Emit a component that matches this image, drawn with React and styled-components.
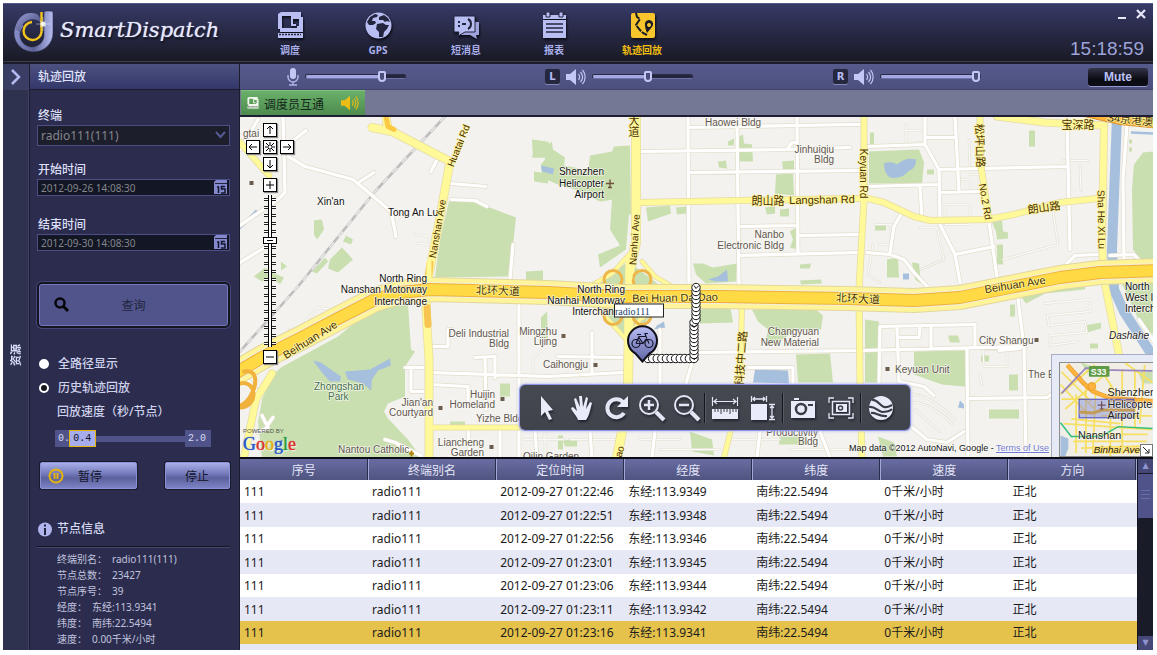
import React, { useState } from 'react';
import styled, { createGlobalStyle, css } from 'styled-components';

const sans = `"Noto Sans", "Noto Sans CJK SC", sans-serif`;
const arial = `"Liberation Sans", "Noto Sans CJK SC", sans-serif`;

const GlobalStyle = createGlobalStyle`
    * { box-sizing: border-box; }
    body {
        margin: 0;
        background: #fff;
        font-family: ${sans};
        font-size: 12px;
    }
    button, input, select {
        font-family: inherit;
        margin: 0;
        padding: 0;
        border: 0;
    }
    button { cursor: pointer; }
`;

const Page = styled.div`
    display: flex;
    height: 100vh;
    padding: 3px 4px 5px 3px;
`;

const Window = styled.div`
    flex: 1;
    min-width: 0;
    display: flex;
    flex-direction: column;
    background: #1b1c2c;
    overflow: hidden;
`;

/* ---------- header ---------- */

const Header = styled.header`
    display: flex;
    flex: none;
    height: 59px;
    border-top: 1px solid #54588a;
    background: linear-gradient(#373a66, #272945 50%, #191a24);
    border-bottom: 1px solid #3b3f4a;
`;

const Brand = styled.div`
    display: flex;
    flex: 0 0 243px;
    padding: 6px 0 0 10px;
    gap: 6px;
`;

const BrandName = styled.h1`
    margin: 0;
    color: #e6e8fc;
    font: italic 21px/40px "DejaVu Serif", serif;
    text-shadow: 0 0 1px #c8cbea, 1px 2px 2px #0a0b14;
`;

const Nav = styled.nav`
    display: flex;
    flex: 1;
`;

const NavItem = styled.button`
    display: flex;
    flex-direction: column;
    align-items: center;
    width: 88px;
    padding-top: 8px;
    background: none;
    color: ${props => props.$active ? '#f0bd10' : '#aab0ec'};
    font-size: 10px;
    line-height: 14px;
    font-weight: bold;
    svg {
        display: block;
        margin-bottom: 4px;
        filter: drop-shadow(1px 2px 1px #0c0d18);
    }
`;

const HeaderSide = styled.div`
    display: flex;
    flex-direction: column;
    justify-content: space-between;
    align-items: flex-end;
    padding: 2px 5px 1px 0;
`;

const WindowButtons = styled.div`
    display: flex;
    gap: 4px;
`;

const WindowButton = styled.button`
    width: 14px;
    height: 14px;
    background: none;
`;

const Clock = styled.time`
    padding-right: 4px;
    color: #9ea3d9;
    font: 19px/22px ${arial};
`;

/* ---------- body ---------- */

const Body = styled.div`
    display: flex;
    flex: 1;
    min-height: 0;
    padding-top: 2px;
`;

const Rail = styled.aside`
    display: flex;
    flex: 0 0 26px;
    flex-direction: column;
    align-items: center;
    background: #2f324f;
    border-right: 1px solid #3f4268;
`;

const RailButton = styled.button`
    width: 25px;
    height: 26px;
    background: #3b3e64;
    svg { display: block; margin: auto; }
`;

const RailLabel = styled.span`
    margin-top: 254px;
    color: #d9dcf5;
    font-size: 11px;
    line-height: 16px;
    font-weight: bold;
    writing-mode: vertical-rl;
    text-orientation: sideways;
    transform: rotate(180deg);
`;

const Sidebar = styled.section`
    flex: 0 0 209px;
    display: flex;
    flex-direction: column;
    margin: 0 1px;
    background: #2c2d4e;
    overflow: hidden;
`;

const SidebarTitle = styled.h2`
    flex: none;
    margin: 0;
    padding-left: 8px;
    height: 26px;
    border-bottom: 1px solid #1b1c30;
    background: linear-gradient(#4d5180, #34376a);
    color: #dfe2fa;
    font-size: 12px;
    line-height: 26px;
    font-weight: 500;
`;

const Form = styled.form`
    display: flex;
    flex-direction: column;
    padding: 18px 9px 0 7px;
`;

const Playback = styled.div`
    display: flex;
    flex-direction: column;
    padding: 24px 9px 0 7px;
`;

const FieldLabel = styled.label`
    margin-bottom: 1px;
    padding-left: 1px;
    color: #dcdff6;
    line-height: 16px;
    font-weight: 500;
`;

const Field = styled.div`
    display: flex;
    position: relative;
    height: ${props => props.$tall ? '21px' : '17px'};
    margin-bottom: ${props => props.$gap};
    border: 1px solid #4c4f86;
    background: ${props => props.$tall ? '#1d1e2b' : '#131624'};
`;

const Select = styled.select`
    flex: 1;
    appearance: none;
    padding-left: 3px;
    background: transparent;
    color: #85868c;
    font-size: 12px;
    line-height: 16px;
`;

const SelectArrow = styled.svg`
    position: absolute;
    right: 3px;
    top: 5px;
    pointer-events: none;
`;

const DateInput = styled.input`
    flex: 1;
    min-width: 0;
    padding-left: 3px;
    background: transparent;
    color: #85868c;
    font-size: 10px;
`;

const CalendarButton = styled.button`
    width: 15px;
    background: none;
    svg { display: block; }
`;

const QueryButton = styled.button`
    position: relative;
    height: 46px;
    border: 2px solid #14151f;
    border-radius: 5px;
    background: #50548a;
    box-shadow: inset 0 0 0 1px #7277be, 0 0 0 1px #42457a;
    color: #23253f;
    font-size: 12px;
    svg {
        position: absolute;
        left: 14px;
        top: 12px;
    }
`;

const RadioRow = styled.label`
    display: flex;
    align-items: center;
    gap: 9px;
    padding-left: 2px;
    color: #cfd2ec;
    font-weight: 500;
    line-height: 24px;
    input {
        appearance: none;
        width: 10px;
        height: 10px;
        border-radius: 5px;
        border: 2px solid #fff;
        background: #fff;
    }
    input:checked { background: #14151f; }
`;

const SpeedLabel = styled.label`
    padding-left: 20px;
    color: #cfd2ec;
    font-weight: 500;
    line-height: 24px;
`;

const Speed = styled.div`
    position: relative;
    display: flex;
    align-items: center;
    justify-content: space-between;
    width: 156px;
    height: 17px;
    margin: 6px 0 15px 18px;
    background: linear-gradient(#50538a, #50538a) center / 100% 6px no-repeat;
`;

const SpeedEnd = styled.span`
    width: 26px;
    padding-left: 3px;
    background: #50538a;
    color: #d9dbee;
    font: 10px/17px "Liberation Mono", monospace;
`;

const SpeedRange = styled.input`
    position: absolute;
    inset: 0;
    width: 100%;
    height: 17px;
    appearance: none;
    background: none;
    &::-webkit-slider-thumb {
        appearance: none;
        width: 27px;
        height: 17px;
        border: 1px solid #e5b40b;
        background: #a7adec;
    }
`;

const SpeedValue = styled.output`
    position: absolute;
    padding-left: 4px;
    color: #101225;
    font: 10px/17px "Liberation Mono", monospace;
    pointer-events: none;
`;

const Actions = styled.div`
    display: flex;
    justify-content: space-between;
    padding-left: 3px;
`;

const ActionButton = styled.button`
    display: flex;
    align-items: center;
    gap: 14px;
    width: ${props => props.$wide ? '97px' : '65px'};
    height: 27px;
    padding-left: ${props => props.$wide ? '7px' : '19px'};
    border: 1px solid #8c92d6;
    border-radius: 2px;
    background: linear-gradient(#a8aee8, #7277b8 45%, #5c609c 60%, #7d83c6);
    box-shadow: 0 0 0 1px #191a2b;
    color: #14162c;
    font-size: 12px;
`;

const InfoTitle = styled.h3`
    display: flex;
    align-items: center;
    gap: 5px;
    margin: 30px 0 7px;
    padding: 0 0 7px 1px;
    border-bottom: 1px solid #15161f;
    box-shadow: 0 1px #45486f;
    color: #d5d8f2;
    font-size: 12px;
    line-height: 20px;
    font-weight: 500;
`;

const InfoList = styled.dl`
    margin: -3px 0 0 20px;
    color: #c0c3de;
    font-size: 10px;
    line-height: 16px;
`;

const InfoRow = styled.div`
    display: flex;
    gap: 5px;
    dd { margin: 0; }
`;

const Main = styled.main`
    display: flex;
    flex: 1;
    flex-direction: column;
    min-width: 0;
`;

const AudioBar = styled.div`
    display: flex;
    flex: none;
    align-items: center;
    height: 26px;
    padding: 0 5px 0 44px;
    border-bottom: 1px solid #41436a;
    background: linear-gradient(#565a8c, #4d507e);
`;

const Channel = styled.label`
    display: flex;
    align-items: center;
    flex: 0 1 ${props => props.$width};
    svg { flex: none; }
`;

const ChannelMark = styled.span`
    width: 15px;
    height: 15px;
    margin-right: 6px;
    border-radius: 2px;
    background: #25273f;
    box-shadow: 0 1px #8388bb;
    color: #b6bbf0;
    font: bold 10px/15px "DejaVu Sans", sans-serif;
    text-align: center;
`;

const VolumeRange = styled.input`
    appearance: none;
    width: 101px;
    height: 13px;
    margin-left: ${props => props.$gap};
    background: none;
    &::-webkit-slider-runnable-track {
        height: 5px;
        border-radius: 3px;
        border: 1px solid #2a2c47;
        border-bottom-color: #6d72a8;
        background: linear-gradient(90deg, #a4a9e2 var(--level), #24263d var(--level));
    }
    &::-webkit-slider-thumb {
        appearance: none;
        width: 8px;
        height: 11px;
        margin-top: -4px;
        border: 2px solid #c3c7f3;
        border-radius: 2px 2px 4px 4px;
        background: #4a4d7a;
    }
`;

const MuteButton = styled.button`
    width: 60px;
    height: 18px;
    margin-left: auto;
    border-radius: 3px;
    background: linear-gradient(#33354a, #0c0d14 60%);
    box-shadow: 0 1px #9297cc;
    color: #bcc1f5;
    font: bold 12px/16px ${arial};
`;

const TabStrip = styled.div`
    display: flex;
    flex: none;
    height: 27px;
    padding-left: 1px;
    border-bottom: 2px solid #1d1e33;
    background: #757894;
`;

const Tab = styled.button`
    display: flex;
    align-items: center;
    width: 124px;
    padding: 0 6px;
    border-top: 1px solid #7fc07f;
    background: linear-gradient(#69b069, #4d8b4e);
    color: #12261a;
    font-size: 12px;
    span { margin: 2px auto 0 5px; }
`;

/* ---------- map ---------- */

const MapArea = styled.div`
    position: relative;
    flex: 1;
    min-height: 0;
    overflow: hidden;
    background: #f3f2ef;
`;

const MapSvg = styled.svg`
    display: block;
    width: 100%;
    height: 100%;
    font-family: ${arial};
`;

const MapNav = styled.div`
    position: absolute;
    left: 6px;
    top: 6px;
    display: grid;
    grid-template-columns: repeat(3, 14px);
    gap: 3px;
    justify-items: center;
`;

const mapKey = css`
    width: 14px;
    height: 14px;
    border: 1px solid #000;
    background: #fff;
    box-shadow: 1px 1px 1px #8a8a8a;
`;

const MapButton = styled.button`
    ${mapKey}
    grid-column: ${props => props.$col};
    margin-top: ${props => props.$apart ? '4px' : '0'};
    svg { display: block; }
`;

const ZoomRange = styled.input`
    grid-column: 2;
    appearance: none;
    writing-mode: vertical-lr;
    width: 14px;
    height: 152px;
    background:
        linear-gradient(#000, #000) 5px 0 / 1px 100% no-repeat,
        linear-gradient(#fff, #fff) 6px 0 / 2px 100% no-repeat,
        linear-gradient(#000, #000) 8px 0 / 1px 100% no-repeat,
        repeating-linear-gradient(transparent 0 3px, #222 3px 4px, #fff 4px 5px, #222 5px 6px, transparent 6px 8px) 1px 0 / 12px 100% no-repeat;
    &::-webkit-slider-thumb {
        appearance: none;
        width: 14px;
        height: 7px;
        border: 1px solid #000;
        background: linear-gradient(#000, #000) center / 6px 1px no-repeat #fff;
    }
`;

const MapTools = styled.div`
    position: absolute;
    left: 280px;
    bottom: 27px;
    display: flex;
    align-items: center;
    height: 45px;
    padding: 0 10px 0 9px;
    border-radius: 5px;
    background: linear-gradient(#474951, #41434c);
    box-shadow: 0 0 0 1px #8f97e4, 0 0 3px 1px #a9b0f5;
`;

const Tool = styled.button`
    width: ${props => props.$wide ? '38px' : '35px'};
    height: 40px;
    background: none;
    svg {
        display: block;
        margin: auto;
        filter: drop-shadow(1px 2px 1px #23252e);
    }
`;

const ToolDivider = styled.span`
    width: 2px;
    height: 30px;
    background: #15161d;
    border-right: 1px solid #5a5d68;
`;

const Credits = styled.div`
    position: absolute;
    right: 104px;
    bottom: 3px;
    color: #111;
    font: 9px/12px ${arial};
    text-shadow: 0 0 2px #fff, 0 0 2px #fff;
    a { color: #7378d0; }
`;

const PoweredBy = styled.div`
    position: absolute;
    left: 3px;
    bottom: 3px;
    color: #555;
    font: 6px/7px ${arial};
`;

const Google = styled.div`
    font: 18px/19px "Liberation Serif", serif;
    text-shadow: 0 0 1px currentColor, 1px 1px 1px #fff;
`;

const Glyph = styled.span`
    color: ${props => props.$color};
`;

const MiniMap = styled.div`
    position: absolute;
    right: 0;
    bottom: 0;
    padding: 7px 0 0 7px;
    border-left: 1px solid #a9adc4;
    border-top: 1px solid #a9adc4;
    background: #e6e9f6;
    svg {
        display: block;
        border: 1px solid #8d8d8d;
        border-right: 0;
        font-family: ${arial};
    }
`;

const MiniToggle = styled.button`
    position: absolute;
    right: 0;
    bottom: 0;
    width: 13px;
    height: 13px;
    border: 1px solid #777;
    background: #fff;
    svg { border: 0; }
`;

/* ---------- table ---------- */

const TableArea = styled.div`
    display: flex;
    flex: none;
    height: 193px;
    border-top: 2px solid #0b0c14;
    background: #e6e8f6;
    overflow: hidden;
`;

const Table = styled.table`
    flex: 1;
    width: 100%;
    height: max-content;
    table-layout: fixed;
    border-collapse: collapse;
    th {
        height: 21px;
        padding: 2px 0 0;
        border-right: 1px solid #a3a7d3;
        box-shadow: inset -1px 0 #2b2d4c;
        background: linear-gradient(#686ca2, #50547f);
        color: #e4e6f8;
        font-weight: normal;
        line-height: 18px;
    }
    td {
        height: 24px;
        padding: 1px 0 0 4px;
        color: #1b1b1b;
        line-height: 20px;
        white-space: nowrap;
    }
`;

const Row = styled.tr`
    background: ${props => props.$selected ? '#e4c24c' : '#fff'};
    &:nth-child(even) { background: #e6e8f6; }
    &:nth-child(odd) td { height: 23px; }
`;

const ScrollBar = styled.div`
    display: flex;
    flex: 0 0 16px;
    flex-direction: column;
    border-left: 1px solid #14151f;
    background: #1a1b29;
`;

const ScrollButton = styled.button`
    height: 14px;
    background: #454877;
    color: #8f94d0;
    font: 8px/14px "DejaVu Sans", sans-serif;
`;

const ScrollThumb = styled.div`
    height: 44px;
    margin: 1px 0 auto;
    padding-top: 16px;
    background: #50538a;
    &::after {
        content: '';
        display: block;
        height: 9px;
        margin: 0 3px;
        background: repeating-linear-gradient(#6a6eaa 0 1px, transparent 1px 4px);
    }
`;

/* ---------- icons ---------- */

const Logo = () => (
    <svg width="41" height="43" viewBox="0 0 41 43">
        <defs>
            <linearGradient id="ring" x1="0" y1="0" x2="1" y2="0">
                <stop offset="0" stopColor="#8a90cc" />
                <stop offset=".5" stopColor="#5d6296" />
                <stop offset="1" stopColor="#b9bef2" />
            </linearGradient>
            <linearGradient id="swoosh" x1="0" y1="0" x2="1" y2="1">
                <stop offset="0" stopColor="#9ba0dc" />
                <stop offset="1" stopColor="#3a3e68" />
            </linearGradient>
        </defs>
        <path d="M31 3a2 2 0 0 1 2-2h5a2 2 0 0 1 2 2v20a19.500 19 0 0 1-39 0c0-5 2-9 5-12l5 5a12 12 0 1 0 20 8z" fill="url(#ring)" stroke="#2a2d4c" strokeWidth=".6" />
        <path d="M2 19C4 8 11 2 19 3c6 0 9 4 9 10-5-5-13-5-18 1-2 2-3 5-3 8z" fill="url(#swoosh)" />
        <path d="M28.500 2v20a9 9 0 1 1-9.500-10" fill="none" stroke="#f2c31c" strokeWidth="2.400" />
        <circle cx="30" cy="14" r="2.600" fill="#fff" opacity=".85" />
        <path d="M23 14h14M30 7v14M27 11l6 6M33 11l-6 6" stroke="#fff" strokeWidth=".7" opacity=".6" />
    </svg>
);

const DispatchIcon = ({ size = 27, color = '#b9bef2' }) => (
    <svg width={size} height={size} viewBox="0 0 27 27">
        <path fillRule="evenodd" d="M4 0h20v5h2v15H3v-3H1V2zM5 4v12h15v-2h2V7h-6v5h3v2h-5V4z" fill={color} />
        <path d="M1 21h25v5H1z" fill={color} />
        <path d="M2 22.500h22" stroke="#23253f" strokeWidth="1.500" strokeDasharray="2 1" />
    </svg>
);

const GlobeIcon = () => (
    <svg width="27" height="27" viewBox="0 0 27 27">
        <circle cx="13.500" cy="13.500" r="13" fill="#b9bef2" />
        <path d="M5 5l5-3 3 1-1 2-4 1-1 3 3 0 1 2-3 2-4 0-2-3zM14 5l5-2 4 3 2 4-3-1-2 1-2-2-4 0zM12 12l6-1 3 2 3 0-2 4-3 3-1 5-4 0 0-5-3-3z" fill="#23253f" />
    </svg>
);

const MessageIcon = () => (
    <svg width="27" height="27" viewBox="0 0 27 27">
        <path d="M8 10h18v13h-3l1 4-7-4H8z" fill="#9fa5dc" />
        <path d="M1 4h21v16H12l-7 4 1-4H1z" fill="#b9bef2" stroke="#22243d" strokeWidth="1" />
        <path d="M5 9h2v2H5zM5 13h2v2H5zM9 11h4v2H9z" fill="#22243d" />
        <path d="M15 7c4 2 4 8 0 10" fill="none" stroke="#22243d" strokeWidth="2" />
    </svg>
);

const ReportIcon = () => (
    <svg width="27" height="27" viewBox="0 0 27 27">
        <path d="M2 3h23v4H2zM2 8h23v18H2z" fill="#b9bef2" />
        <path d="M5 0h4v5H5zM18 0h4v5h-4z" fill="#b9bef2" stroke="#23253f" />
        <path d="M5 12h17M5 16h17M5 20h17" stroke="#23253f" strokeWidth="1.500" />
    </svg>
);

const TrackIcon = () => (
    <svg width="27" height="27" viewBox="0 0 27 27">
        <rect x="2" y="1" width="24" height="25" rx="2" fill="#f8c62c" />
        <path d="M7 1l1 4 3 2-4 6 4 5 3 3 4 2" fill="none" stroke="#1b1c24" strokeWidth="2" strokeDasharray="7 1" />
        <path fillRule="evenodd" d="M20 8a4 4 0 0 1 4 5c-1 3-4 5-6 8-1-3-2-5-2-8a4 4 0 0 1 4-5zm0 3a2 2 0 1 0 .1 0z" fill="#1b1c24" />
    </svg>
);

const MicIcon = () => (
    <svg width="17" height="18" viewBox="0 0 17 18">
        <rect x="6" y="0" width="6" height="11" rx="3" fill="#c3c7f3" />
        <path d="M4 7v2a5 5 0 0 0 10 0V7M9 14v3M5 17h8" fill="none" stroke="#aeb3e8" strokeWidth="1.500" />
    </svg>
);

const SpeakerIcon = ({ color = '#c3c7f3', width = 20 }) => (
    <svg width={width} height="16" viewBox="0 0 20 16">
        <path d="M0 5h4l6-5v16l-6-5H0z" fill={color} />
        <path d="M12.500 5c1.500 2 1.500 4 0 6M14.500 3c2.500 3 2.500 7 0 10M16.500 1c3.500 4 3.500 10 0 14" fill="none" stroke={color} strokeWidth="1.200" />
    </svg>
);

const CalendarIcon = () => (
    <svg width="14" height="15" viewBox="0 0 14 15">
        <path d="M0 2l2-2h11v14H0z" fill="#8388cf" />
        <path d="M1 3.500h12" stroke="#23253f" strokeWidth="1" />
        <path d="M3 7h1.500v6M11 6.500H7.500v2.500H11v4H7" fill="none" stroke="#15162a" strokeWidth="1.500" />
    </svg>
);

const tool = { fill: 'none', stroke: '#e4e6f6', strokeWidth: 2 };

const CursorIcon = () => (
    <svg width="26" height="26" viewBox="0 0 26 26"><path d="M7 1l12 14-5 1 4 8-3 1-4-8-4 4z" fill="#e9ebfa" /></svg>
);

const HandIcon = () => (
    <svg width="26" height="26" viewBox="0 0 26 26">
        <path d="M9 25c-1-4-6-8-7-12l2-1 4 4L5 4l2-1 4 9-1-11h3l1 11 3-10 2 1-2 11 4-7 2 1c-2 8-3 13-6 17z" fill="#e9ebfa" />
    </svg>
);

const RedoIcon = () => (
    <svg width="26" height="26" viewBox="0 0 26 26">
        <path d="M19 7a9 9 0 1 0 1 11" {...tool} strokeWidth="4" />
        <path d="M24 1v11H13z" fill="#e9ebfa" />
    </svg>
);

const ZoomIcon = ({ plus }) => (
    <svg width="28" height="28" viewBox="0 0 28 28">
        <circle cx="11" cy="11" r="9" {...tool} />
        <path d="M18 18l8 8" {...tool} strokeWidth="4" />
        <path d={plus ? 'M6 11h10M11 6v10' : 'M6 11h10'} {...tool} strokeWidth="2.500" />
    </svg>
);

const RulerIcon = () => (
    <svg width="28" height="24" viewBox="0 0 28 24">
        <path d="M1 13h26v10H1z" fill="#e9ebfa" />
        <path d="M4 13v3M7 13v3M10 13v5M13 13v3M16 13v3M19 13v5M22 13v3M25 13v3" stroke="#3a3c46" />
        <path d="M1.500 1v9M26.500 1v9M3 5.500h22M6 3L3 5.500 6 8M22 3l3 2.500L22 8" {...tool} strokeWidth="1.200" />
    </svg>
);

const AreaIcon = () => (
    <svg width="26" height="26" viewBox="0 0 26 26">
        <path d="M1 9h16v16H1z" fill="#e9ebfa" />
        <path d="M1.500 1v6M16.500 1v6M3 4h12M5 2L3 4l2 2M13 2l2 2-2 2M19 9.500h6M19 24.500h6M22 11v12M20 13l2-2 2 2M20 21l2 2 2-2" {...tool} strokeWidth="1.300" />
    </svg>
);

const CameraIcon = () => (
    <svg width="26" height="22" viewBox="0 0 26 22">
        <path d="M4 1h5v2H4zM1 4h24v17H1z" fill="#e9ebfa" />
        <circle cx="11" cy="12" r="5" fill="none" stroke="#3a3c46" strokeWidth="2.500" />
        <path d="M18 7h5v2h-5z" fill="#3a3c46" />
    </svg>
);

const CaptureIcon = () => (
    <svg width="26" height="22" viewBox="0 0 26 22">
        <path d="M1 6V1h5M20 1h5v5M25 16v5h-5M6 21H1v-5" {...tool} strokeWidth="1.300" />
        <rect x="4.500" y="4.500" width="17" height="13" {...tool} strokeWidth="1.500" />
        <path d="M8 7h11v8H8z" fill="#e9ebfa" />
        <circle cx="12.500" cy="11" r="2" fill="none" stroke="#3a3c46" strokeWidth="1.500" />
    </svg>
);

const EarthIcon = () => (
    <svg width="26" height="26" viewBox="0 0 26 26">
        <circle cx="13" cy="13" r="12" fill="#e9ebfa" />
        <path d="M4 5c5-1 7 5 12 7 4 1 6-1 8-2M1 12c6-1 8 4 13 5 5 0 8-1 10-3M3 18c5-1 8 4 16 3" fill="none" stroke="#3a3c46" strokeWidth="2.200" />
    </svg>
);

/* ---------- map data ---------- */

const parks = [
    'M449 202L471 201L516 218L513 245L508 277L435 278L440 240Z',
    'M338 337L361 318L388 307L408 305L411 350L415 352L405 367L405 397L388 404L384 412L388 419L408 440L421 458L262 458L258 423L262 400L271 377L281 368Z',
    'M545 148L552 142L553 150L565 158L564 166L575 168L588 172L590 156L612 152L614 147L630 146L631 215L612 214L614 200L600 202L575 190L560 186L542 178L541 165L545 160Z',
    'M612 200L630 202L626 250L600 268L598 255L620 246L610 230Z',
    'M534 150L548 142L552 150L544 158L532 158ZM534 172L548 174L548 184L534 182Z',
    'M590 292L628 262L668 292L628 346Z',
    'M646 208L670 206L671 214L648 222ZM676 208L686 207L686 214L677 215Z',
    'M738 138L743 135L744 144L752 145L753 162L739 162ZM728 142L734 139L734 146L728 146ZM718 162L726 161L727 169L719 168Z',
    'M782 162L794 161L794 170L783 170ZM776 175L793 174L794 196L775 194Z',
    'M765 208L775 207L775 214L767 215ZM780 210L789 209L789 217L780 217ZM790 232L796 228L797 250L790 248L793 240Z',
    'M693 264L703 264L713 268L737 264L736 282L706 284L696 275Z',
    'M800 265L811 264L810 269L800 269ZM800 281L821 280L822 284L801 285Z',
    'M869 152L919 150L924 163L922 184L869 184Z',
    'M870 133h4v12h-4ZM1029 131h6v16h-6ZM927 170h7v5h-7Z',
    'M992 223L1002 221L1003 232L1008 233L1008 239L997 240L996 232ZM997 245h6v20h-6Z',
    'M887 260L898 258L899 278L887 278ZM912 263L919 264L921 284L915 280ZM875 225h11v6h-11Z',
    'M1154 152L1143 153L1134 165L1132 190L1133 250L1145 266L1154 270Z',
    'M1129 148h3v4h-3ZM1129 140h3v4h-3Z',
    'M1020 296L1050 288L1085 285L1085 290L1045 294L1026 304Z',
    'M752 310L812 307L823 316L821 330L797 330L775 345L765 345L768 330L758 322Z',
    'M700 310L730 307L733 323L700 324Z',
    'M796 355L830 354L833 383L798 383Z',
    'M865 320L879 322L879 383L865 383Z',
    'M914 352L965 351L965 387L942 385L914 375Z',
    'M948 336L958 336L960 343L950 343ZM981 356h8v6h-8ZM1009 375h9v16h-9ZM989 410h30v9h-30ZM1085 326l16-3v6l-14 4ZM1010 305h5v12h-5ZM1090 344h8v5h-8Z',
    'M500 384h10v13h-10ZM541 318L547 312L548 340L541 338ZM450 422h15v5h-15Z',
    'M314 221L322 220L324 230L317 240L314 235ZM346 236l7 4l-2 5l-8-3ZM330 260L342 248L353 260L338 273L328 269ZM312 272L325 258L328 262L317 274ZM254 277L265 268L270 272L284 278L280 285L270 276L262 282Z',
    'M532 140L547 142L548 158L533 158ZM526 272L543 271L543 282L526 282ZM281 262l6 5l-6 4Z',
    'M690 432L712 440L714 456L692 452ZM558 436h5v14h-5ZM779 437h28v8h-28ZM878 437l16 6l3 14h-14ZM563 441l14-2v8h-12Z',
    'M1120 280L1154 270L1154 335L1143 330Z'
];

const waters = [
    'M313 361L321 363L341 377L340 382L330 382L322 373Z',
    'M345 372L370 370L390 359L391 366L378 371L372 380L371 391L363 384L348 380Z',
    'M884 164Q890 161 897 165Q906 157 916 160Q917 168 908 172Q902 180 890 178Q884 174 884 164Z',
    'M541 166L554 169L553 175L542 172Z',
    'M708 280L718 277L727 270L728 282L716 282Z',
    'M657 326L664 322L665 328L654 330Z',
    'M755 370L788 371L789 384L753 383Z',
    'M873 411L884 411L884 425L872 425Z',
    'M960 401l4 4v4l-6-1ZM903 274h6v6h-6Z',
    'M240 226L256 210L259 213L240 230Z'
];

const streets = [
    'M688 117L689 287', 'M737 126L739 287', 'M797 117L798 254', 'M688 128L850 125', 'M642 152L787 150L850 148',
    'M690 173L862 171', 'M740 227L797 226', 'M800 236L862 235', 'M740 256L860 253', 'M787 150L792 143L797 143',
    'M867 253L890 255L904 260L914 273L930 290', 'M890 253L894 227L902 213', 'M867 147L925 145L939 170L940 220',
    'M925 117L925 145', 'M927 138L955 138', 'M955 117L959 192', 'M939 170L1067 167', 'M1067 120L1070 250',
    'M867 187L938 185', 'M920 187L922 218', 'M940 193L979 192', 'M940 225L955 255L960 283', 'M955 255L994 247',
    'M989 223L997 277', 'M1064 267L1075 256L1098 255', 'M1110 256L1134 255L1145 267', 'M847 125L862 125',
    'M879 383L880 327L975 325L975 347', 'M862 351L1024 347', 'M897 328L899 382L924 387L934 396', 'M920 328L919 338L899 338',
    'M931 328L931 347', 'M967 350L968 458', 'M1017 292L1024 347L1026 458', 'M969 399L1047 398L1056 392',
    'M905 422L927 440L947 443L964 432', 'M999 351L1020 349', 'M699 353L862 351', 'M748 368L793 368L793 384',
    'M692 363L686 384', 'M660 330L660 384', 'M519 303L519 458', 'M430 373L548 377L623 373', 'M592 333L592 373',
    'M558 357L622 358', 'M430 347L448 347L448 330L452 330', 'M475 358L495 357L495 378', 'M485 358L486 410',
    'M430 385L468 387L468 403', 'M405 368L427 368', 'M411 368L411 392L425 392', 'M385 440L395 443L421 456',
    'M468 430L470 458', 'M535 432L537 458', 'M590 432L592 458', 'M655 432L652 458', 'M760 432L757 458', 'M820 432L830 458',
    'M283 117L285 193L278 200L240 226', 'M288 157L305 167L353 180L371 195L391 212L396 237', 'M360 182L374 173',
    'M292 142L306 131', 'M438 158L431 172', 'M451 184L486 187', 'M451 200L475 201L487 207', 'M513 245L510 280',
    'M240 263L265 248L276 240', 'M240 150L258 120', 'M262 416L268 428L258 433M268 425L273 418', 'M1139 320L1154 342',
    'M500 431L500 458', 'M1127 125L1123 180L1124 262', 'M240 372L256 391'
];

const lanes = [
    'M908 165M906 125L906 144L925 143M906 131h19M969 140L970 168M960 180h10v12M970 175h9v14',
    'M945 205h25v20h-25Z M920 228h17l7 32l-23 10', 'M1003 260L1058 245L1053 212', 'M873 245L868 275L880 283M875 225h16v20h-12',
    'M1045 304L1090 300L1090 312L1047 316L1049 326L1085 322L1087 333L1050 336L1050 346L1078 342', 'M983 350h24v17h-23Z',
    'M1063 161h25M1080 167l1 24', 'M524 440h40M545 432v26M570 440h50M640 440h40M660 450h60M730 440h50M790 450h66',
    'M900 395c20-5 40 10 55 25M905 403c20-3 38 12 48 22M915 410l25 22', 'M415 235l15 2v8l-12-1', 'M298 330l20-22l35 5M270 360l20-30',
    'M526 385L519 404M548 345l-15 14v16', 'M980 375l2 10'
];

const avenues = [
    { d: 'M386 117L388 130M372 128L392 132L450 162L441 212L429 275L426 310L429 360L429 458', w: 8 },
    { d: 'M636 117L636 243L630 270L628 384L622 432L617 458', w: 9 },
    { d: 'M640 203L847 199L868 199L884 203L914 217L930 221L987 220L1014 215L1060 203L1098 199', w: 6 },
    { d: 'M864 117L864 200L859 290L860 384L862 458', w: 6 },
    { d: 'M980 117L981 167L989 220', w: 6 },
    { d: 'M997 117L1045 123L1104 126L1102 243L1104 280L1118 350L1124 380', w: 7 },
    { d: 'M742 305L740 383L731 430L724 458', w: 5 },
    { d: 'M430 428L520 428', w: 5 },
    { d: 'M240 143L269 176', w: 6 },
    { d: 'M630 254L612 274L588 288L548 285M642 262L655 277L672 287', w: 4 },
    { d: 'M590 300L628 342L640 320L668 302', w: 4 },
    { d: 'M244 458L256 400L272 374', w: 7 }
];

const highway = 'M230 377L262 358L300 339L338 319L375 300L400 293L430 290L548 293L620 297L720 297L847 299L914 301L960 298L1010 288L1060 278L1100 273L1160 271';

const labels = [
    { x: 243, y: 137, t: 'gtai', poi: true }, { x: 317, y: 205, t: "Xin'an" }, { x: 388, y: 216, t: 'Tong An Lu' },
    { x: 427, y: 282, t: 'North Ring', end: true }, { x: 427, y: 293, t: 'Nanshan Motorway', end: true }, { x: 427, y: 305, t: 'Interchange', end: true },
    { x: 604, y: 175, t: 'Shenzhen', end: true }, { x: 604, y: 187, t: 'Helicopter', end: true }, { x: 604, y: 198, t: 'Airport', end: true },
    { x: 625, y: 293, t: 'North Ring', end: true }, { x: 625, y: 304, t: 'Nanhai Motorway', end: true }, { x: 625, y: 315, t: 'Interchange', end: true },
    { x: 705, y: 126, t: 'Haowei Bldg', poi: true }, { x: 834, y: 153, t: 'Jinhuiqiu', end: true, poi: true }, { x: 834, y: 163, t: 'Bldg', end: true, poi: true },
    { x: 784, y: 238, t: 'Nanbo', end: true, poi: true }, { x: 784, y: 249, t: 'Electronic Bldg', end: true, poi: true },
    { x: 509, y: 337, t: 'Deli Industrial', end: true, poi: true }, { x: 509, y: 347, t: 'Bldg', end: true, poi: true },
    { x: 557, y: 335, t: 'Mingzhu', end: true, poi: true }, { x: 557, y: 345, t: 'Lijing', end: true, poi: true }, { x: 588, y: 368, t: 'Caihongju', end: true, poi: true },
    { x: 314, y: 390, t: 'Zhongshan', park: true }, { x: 328, y: 400, t: 'Park', park: true },
    { x: 433, y: 406, t: "Jian'an", end: true, poi: true }, { x: 433, y: 416, t: 'Courtyard', end: true, poi: true },
    { x: 495, y: 398, t: 'Huijin', end: true, poi: true }, { x: 495, y: 408, t: 'Homeland', end: true, poi: true }, { x: 476, y: 422, t: 'Yizhe Bldg', poi: true },
    { x: 484, y: 446, t: 'Liancheng', end: true, poi: true }, { x: 484, y: 456, t: 'Garden', end: true, poi: true }, { x: 338, y: 453, t: 'Nantou Catholic', poi: true },
    { x: 523, y: 460, t: 'Qilin Garden', poi: true }, { x: 819, y: 335, t: 'Changyuan', end: true, poi: true }, { x: 819, y: 346, t: 'New Material', end: true, poi: true },
    { x: 818, y: 436, t: 'Productivity', end: true, poi: true }, { x: 818, y: 445, t: 'Bldg', end: true, poi: true }, { x: 979, y: 344, t: 'City Shangu', poi: true },
    { x: 895, y: 373, t: 'Keyuan Unit', poi: true }, { x: 1028, y: 378, t: 'The E', poi: true }, { x: 1125, y: 290, t: 'North' }, { x: 1125, y: 301, t: 'West I' }, { x: 1125, y: 312, t: 'Interch' }
];

const roadLabels = [
    { x: 458, y: 146, a: -68, t: 'Huatai Rd', s: 10 }, { x: 437, y: 229, a: -80, t: 'Nanshan Ave', s: 10 }, { x: 634, y: 240, a: -86, t: 'Nanhai Ave', s: 10 },
    { x: 634, y: 121, a: 0, t: '大' }, { x: 634, y: 132, a: 0, t: '道' }, { x: 822, y: 200, a: -1, t: 'Langshan Rd' }, { x: 768, y: 201, a: 0, t: '朗山路' }, { x: 1044, y: 208, a: -8, t: '朗山路' },
    { x: 864, y: 174, a: 90, t: 'Keyuan Rd', s: 10 }, { x: 980, y: 146, a: 88, t: '松坪山路' }, { x: 986, y: 202, a: 80, t: 'No.2 Rd', s: 10 },
    { x: 1078, y: 125, a: 0, t: '宝深路' }, { x: 1102, y: 220, a: 89, t: 'Sha He Xi Lu', s: 10 }, { x: 310, y: 340, a: -32, t: 'Beihuan Ave' },
    { x: 498, y: 291, a: 2, t: '北环大道' }, { x: 675, y: 298, a: -1, t: 'Bei Huan Da Dao' }, { x: 858, y: 299, a: 3, t: '北环大道' }, { x: 1015, y: 285, a: -9, t: 'Beihuan Ave' },
    { x: 741, y: 359, a: -86, t: '科技中二路' }, { x: 619, y: 452, a: -76, t: 'ao', s: 10 }, { x: 1130, y: 120, a: 6, t: 'S4京港澳' }
];

const dots = [[251, 183], [563, 336], [595, 365], [440, 408], [502, 399], [491, 447], [1036, 340], [887, 369]];

const trail = [
    ...Array.from({ length: 11 }, (_, i) => [648 + i * 4.6, 359]),
    ...Array.from({ length: 9 }, (_, i) => [694, 355 - i * 4]),
    ...Array.from({ length: 9 }, (_, i) => [696, 320 - i * 4])
];

const CityMap = () => (
    <MapSvg viewBox="240 117 913 341" preserveAspectRatio="xMidYMid slice" role="img" aria-label="Map">
        <rect x="0" y="0" width="1400" height="700" fill="#f3f2ef" />
        {parks.map(d => <path key={d} d={d} fill="#c9dfaf" />)}
        {waters.map(d => <path key={d} d={d} fill="#a5bfdd" />)}
        <path d="M1117 117L1112 250L1114 290L1124 312L1155 360" fill="none" stroke="#a5bfdd" strokeWidth="10" />
        <path d="M1131 133L1154 134" stroke="#a5bfdd" strokeWidth="2.5" />
        <g fill="none" strokeLinejoin="round" strokeLinecap="round">
            <path d={lanes.join('')} stroke="#e2ded2" strokeWidth="2.500" />
            <path d={lanes.join('')} stroke="#fafaf7" strokeWidth="1.300" />
            <path d="M445 117L375 192L298 287L240 352" stroke="#bdbdbd" strokeWidth="2.600" />
            <path d="M445 117L375 192L298 287L240 352" stroke="#e9e9e9" strokeWidth="1.600" strokeDasharray="7 7" strokeLinecap="butt" />
            <path d={streets.join('')} stroke="#e3ddcb" strokeWidth="4.600" />
            <path d={streets.join('')} stroke="#fff" strokeWidth="3.200" />
            {avenues.map(({ d, w }) => <path key={d} d={d} stroke="#e6dca2" strokeWidth={w + 1} />)}
            {avenues.map(({ d, w }) => <path key={d} d={d} stroke="#fff99a" strokeWidth={w - 0.5} />)}
            <path d="M386 117L388 127L394 130" stroke="#fcc945" strokeWidth="5" />
            <path d="M427 308L428 325M430 264L428 282" stroke="#f8c552" strokeWidth="7" />
            <g stroke="#eeb549" strokeWidth="3">
                <circle cx="613" cy="280" r="9" />
                <circle cx="642" cy="280" r="9" />
                <circle cx="613" cy="316" r="9" />
                <circle cx="642" cy="316" r="9" />
            </g>
            <path d={highway} stroke="#e2d79d" strokeWidth="25" />
            <path d={highway} stroke="#fff49a" strokeWidth="23" />
            <path d={highway} stroke="#f1eedb" strokeWidth="15" />
            <path d={highway} stroke="#efb13a" strokeWidth="13" />
            <path d={highway} stroke="#ffda45" strokeWidth="11" />
            <path d="M429 280V262" stroke="#fff99a" strokeWidth="5" />
            <path d="M629 278V262M628 310V340" stroke="#fff99a" strokeWidth="7" />
            <path d="M240 384c18-4 18 24 0 24M244 372c20-4 10 30-4 34" stroke="#f0b23c" strokeWidth="4" />
            <path d="M1085 112L1120 120L1160 124" stroke="#d9922a" strokeWidth="11" />
            <path d="M1085 112L1120 120L1160 124" stroke="#ffb43c" strokeWidth="9" />
        </g>
        {dots.map(([x, y]) => <rect key={x} x={x - 1.5} y={y - 1.5} width="4" height="4" fill="#6b5d4d" />)}
        <path d="M409 454h5M411.500 451v6" stroke="#b08400" strokeWidth="2" />
        <path d="M610 180v8M606 184h8M608 188h4" stroke="#6d4f3a" strokeWidth="1.300" />
        <g fontSize="10" paintOrder="stroke" stroke="#fbfaf6" strokeOpacity=".8" strokeWidth="1.600" strokeLinejoin="round">
            {labels.map(l => (
                <text
                    key={l.t + l.x + l.y}
                    x={l.x}
                    y={l.y}
                    textAnchor={l.end ? 'end' : 'start'}
                    fill={l.park ? '#46704a' : l.poi ? '#5f564f' : '#101010'}
                >{l.t}</text>
            ))}
            <text x="1109" y="339" fontStyle="italic" fill="#1c1c1c">Dashahe</text>
        </g>
        <g paintOrder="stroke" stroke="#fff59d" strokeWidth="1.500" strokeLinejoin="round" fill="#4a3000" textAnchor="middle">
            {roadLabels.map(l => (
                <text key={l.t + l.x} fontSize={l.s || 11} transform={`translate(${l.x} ${l.y}) rotate(${l.a})`} y="4">{l.t}</text>
            ))}
        </g>
        <g fill="#fff" stroke="#111" strokeWidth="1">
            {trail.map(([x, y]) => <circle key={`${x}-${y}`} cx={x} cy={y} r="4.200" />)}
            <path d="M694 286l2 3 3-3M692 325l2 3 3-3M692 358l2 2 3-2" fill="none" />
        </g>
        <rect x="614.500" y="304.500" width="49" height="13" fill="#fff" stroke="#222" />
        <text x="615" y="315" fontSize="10" fontFamily="Liberation Serif, serif" fill="#1b3f66">radio111</text>
        <defs>
            <linearGradient id="pin" x1="0" y1="0" x2="0" y2="1">
                <stop offset="0" stopColor="#b8bdf3" />
                <stop offset="1" stopColor="#6065a6" />
            </linearGradient>
        </defs>
        <path d="M642.500 362l-7-8a14.500 14.500 0 1 1 14 0z" fill="url(#pin)" stroke="#0e0f18" strokeWidth="2" />
        <g fill="none" stroke="#15162a" strokeWidth="1.200">
            <circle cx="636" cy="344" r="4" />
            <circle cx="649" cy="344" r="4" />
            <path d="M636 344l3-7h7l3 7M639 338l4 6 4-6M643 344h-7M637 335h4M646 337l-1-3h3" />
        </g>
    </MapSvg>
);

const Overview = () => (
    <svg width="94" height="95" viewBox="1059 363 94 95">
        <rect x="1059" y="363" width="94" height="95" fill="#f1eee6" />
        <path d="M1059 437l8 3v10l-3 8h-5z" fill="#a5bfdd" />
        <path d="M1080 363v-1l10 4-3 8zM1138 372h15v12h-10z" fill="#c9dfaf" />
        <g fill="none">
            <path d="M1060 372l30 30M1059 395l35-30M1064 410l40-35M1070 420l50 5M1075 395v60M1085 385v70M1095 390l-3 66M1110 385v73M1122 370v86M1135 370v60M1145 365l-5 60M1059 385l28 30M1062 425l90 6M1072 443h75M1080 450l60-2M1060 400h24l10 10M1100 370l20 30M1125 363l28 20M1100 417h52M1098 436h50" stroke="#f7df62" strokeWidth="1.800" />
            <path d="M1066 365L1082 383L1092 392L1110 399L1153 402" stroke="#e79a2c" strokeWidth="4.500" />
            <path d="M1066 365L1082 383L1092 392L1110 399L1153 402" stroke="#ffb43c" strokeWidth="3" />
            <path d="M1060 394L1085 368L1100 370L1153 371" stroke="#9a86bb" strokeWidth="1.800" />
            <path d="M1059 424L1070 438L1100 438L1118 428L1153 430" stroke="#2fbf7a" strokeWidth="1.500" />
        </g>
        <circle cx="1091" cy="387" r="4" fill="#ffb43c" stroke="#e79a2c" />
        <rect x="1088" y="366" width="21" height="11" rx="1" fill="#5f9b46" />
        <text x="1098" y="375" fontSize="9" fontWeight="bold" fill="#fff" textAnchor="middle">S33</text>
        <rect x="1078" y="400" width="56" height="19" fill="#7f84dc" fillOpacity=".45" stroke="#4146c4" />
        <path d="M1078 413l14 1 10-3h32" fill="none" stroke="#c29b58" strokeWidth="3" />
        <path d="M1101 402v8M1097 406h8M1099 410h4" stroke="#6d4f5a" strokeWidth="1.200" />
        <g fontSize="11" fill="#222" stroke="#fff" strokeOpacity=".5" strokeWidth="1.500" paintOrder="stroke">
            <text x="1107" y="397">Shenzhen</text>
            <text x="1107" y="409">Helicopter</text>
            <text x="1107" y="420">Airport</text>
            <text x="1077" y="441">Nanshan</text>
            <text x="1093" y="455" fontSize="10" fontStyle="italic" stroke="#ffe066" strokeOpacity="1">Binhai Ave</text>
        </g>
    </svg>
);

const Volume = ({ name, start, gap }) => {
    const [level, setLevel] = useState(start);
    return (
        <VolumeRange
            type="range"
            aria-label={name}
            value={level}
            $gap={gap}
            style={{ '--level': `${level}%` }}
            onChange={e => setLevel(e.target.value)}
        />
    );
};

const navItems = [
    { name: '调度', icon: <DispatchIcon /> },
    { name: 'GPS', icon: <GlobeIcon /> },
    { name: '短消息', icon: <MessageIcon /> },
    { name: '报表', icon: <ReportIcon /> },
    { name: '轨迹回放', icon: <TrackIcon />, active: true }
];

const info = [
    ['终端别名：', 'radio111(111)'],
    ['节点总数：', '23427'],
    ['节点序号：', '39'],
    ['经度：', '东经:113.9341'],
    ['纬度：', '南纬:22.5494'],
    ['速度：', '0.00千米/小时']
];

const columns = ['序号', '终端别名', '定位时间', '经度', '纬度', '速度', '方向'];

const points = [
    ['01:22:46', '9349'],
    ['01:22:51', '9348'],
    ['01:22:56', '9346'],
    ['01:23:01', '9345'],
    ['01:23:06', '9344'],
    ['01:23:11', '9342'],
    ['01:23:16', '9341']
];

const googleLetters = [['G', '#2a56c6'], ['o', '#d8332b'], ['o', '#e5ac12'], ['g', '#2a56c6'], ['l', '#2a9a3e'], ['e', '#d8332b']];

const panKeys = [
    { name: 'Up', col: 2, d: 'M6 10V2M3 5l3-3 3 3' },
    { name: 'Left', col: 1, d: 'M10 6H2M5 3L2 6l3 3' },
    { name: 'Center', col: 2, d: 'M6 1v4M6 7v4M1 6h4M7 6h4M2 2l3 3M10 2L7 5M2 10l3-3M10 10L7 7' },
    { name: 'Right', col: 3, d: 'M2 6h8M7 3l3 3-3 3' },
    { name: 'Down', col: 2, d: 'M6 2v8M3 7l3 3 3-3' },
    { name: 'Zoom in', col: 2, apart: true, d: 'M2 6h8M6 2v8' }
];

const MapKey = ({ name, col, apart, d }) => (
    <MapButton type="button" aria-label={name} $col={col} $apart={apart}>
        <svg width="12" height="12"><path d={d} fill="none" stroke="#000" /></svg>
    </MapButton>
);

const ControlPanel = () => {
    const [speed, setSpeed] = useState(0.4);
    return (
        <Sidebar>
            <SidebarTitle>轨迹回放</SidebarTitle>
            <Form onSubmit={e => e.preventDefault()}>
                <FieldLabel htmlFor="terminal">终端</FieldLabel>
                <Field $tall $gap="16px">
                    <Select id="terminal"><option>radio111(111)</option></Select>
                    <SelectArrow width="11" height="8"><path d="M1 1l4.500 5L10 1" fill="none" stroke="#555a96" strokeWidth="2" /></SelectArrow>
                </Field>
                <FieldLabel htmlFor="from">开始时间</FieldLabel>
                <Field $gap="21px">
                    <DateInput id="from" defaultValue="2012-09-26 14:08:30" />
                    <CalendarButton type="button" aria-label="Pick start"><CalendarIcon /></CalendarButton>
                </Field>
                <FieldLabel htmlFor="to">结束时间</FieldLabel>
                <Field $gap="31px">
                    <DateInput id="to" defaultValue="2012-09-30 14:08:30" />
                    <CalendarButton type="button" aria-label="Pick end"><CalendarIcon /></CalendarButton>
                </Field>
                <QueryButton type="submit">
                    <svg width="18" height="18"><circle cx="7" cy="7" r="4.500" fill="none" stroke="#06060a" strokeWidth="2.500" /><path d="M10 10l5 5" stroke="#06060a" strokeWidth="3" /></svg>
                    查询
                </QueryButton>
            </Form>
            <Playback>
                <RadioRow><input type="radio" name="mode" />全路径显示</RadioRow>
                <RadioRow><input type="radio" name="mode" defaultChecked />历史轨迹回放</RadioRow>
                <SpeedLabel htmlFor="speed">回放速度（秒/节点）</SpeedLabel>
                <Speed>
                    <SpeedEnd>0.</SpeedEnd>
                    <SpeedEnd>2.0</SpeedEnd>
                    <SpeedRange id="speed" type="range" min="0.2" max="2" step="0.1" value={speed} onChange={e => setSpeed(Number(e.target.value))} />
                    <SpeedValue htmlFor="speed" style={{ left: (speed - 0.2) / 1.8 * 129 }}>{speed.toFixed(1)}</SpeedValue>
                </Speed>
                <Actions>
                    <ActionButton type="button" $wide>
                        <svg width="16" height="16"><circle cx="8" cy="8" r="6.500" fill="none" stroke="#e5b40b" strokeWidth="2" /><path d="M6.500 5v6M9.500 5v6" stroke="#e5b40b" strokeWidth="2" /></svg>
                        暂停
                    </ActionButton>
                    <ActionButton type="button">停止</ActionButton>
                </Actions>
                <InfoTitle>
                    <svg width="14" height="15"><circle cx="7" cy="7.500" r="7" fill="#b0b5ee" /><path d="M6 2.500h2v2H6zM6 6h2v7H6z" fill="#20223a" /></svg>
                    节点信息
                </InfoTitle>
                <InfoList>
                    {info.map(([term, value]) => (
                        <InfoRow key={term}><dt>{term}</dt><dd>{value}</dd></InfoRow>
                    ))}
                </InfoList>
            </Playback>
        </Sidebar>
    );
};

const MapPanel = () => (
    <MapArea>
        <CityMap />
        <MapNav>
            {panKeys.map(key => <MapKey key={key.name} {...key} />)}
            <ZoomRange type="range" aria-label="Zoom" defaultValue="29" />
            <MapKey name="Zoom out" col={2} d="M2 6h8" />
        </MapNav>
        <PoweredBy>
            POWERED BY
            <Google>{googleLetters.map(([c, color], i) => <Glyph key={i} $color={color}>{c}</Glyph>)}</Google>
        </PoweredBy>
        <Credits>Map data ©2012 AutoNavi, Google - <a href="#terms">Terms of Use</a></Credits>
        <MiniMap>
            <Overview />
            <MiniToggle type="button" aria-label="Toggle overview">
                <svg width="11" height="11"><path d="M2 2l6 6M8 4v4H4" fill="none" stroke="#222" /></svg>
            </MiniToggle>
        </MiniMap>
        <MapTools>
            <Tool type="button" aria-label="Select"><CursorIcon /></Tool>
            <Tool type="button" aria-label="Pan"><HandIcon /></Tool>
            <Tool type="button" aria-label="Refresh"><RedoIcon /></Tool>
            <Tool type="button" aria-label="Magnify"><ZoomIcon plus /></Tool>
            <Tool type="button" aria-label="Reduce"><ZoomIcon /></Tool>
            <ToolDivider />
            <Tool type="button" aria-label="Distance" $wide><RulerIcon /></Tool>
            <Tool type="button" aria-label="Area" $wide><AreaIcon /></Tool>
            <ToolDivider />
            <Tool type="button" aria-label="Snapshot" $wide><CameraIcon /></Tool>
            <Tool type="button" aria-label="Capture region" $wide><CaptureIcon /></Tool>
            <ToolDivider />
            <Tool type="button" aria-label="Earth" $wide><EarthIcon /></Tool>
        </MapTools>
    </MapArea>
);

const PointTable = () => (
    <TableArea>
        <Table>
            <thead>
                <tr>{columns.map(name => <th key={name} scope="col">{name}</th>)}</tr>
            </thead>
            <tbody>
                {points.map(([time, lng], i) => (
                    <Row key={time} $selected={i === points.length - 1}>
                        <td>111</td>
                        <td>radio111</td>
                        <td>2012-09-27 {time}</td>
                        <td>东经:113.{lng}</td>
                        <td>南纬:22.5494</td>
                        <td>0千米/小时</td>
                        <td>正北</td>
                    </Row>
                ))}
            </tbody>
        </Table>
        <ScrollBar>
            <ScrollButton type="button" aria-label="Scroll up">▲</ScrollButton>
            <ScrollThumb />
            <ScrollButton type="button" aria-label="Scroll down">▼</ScrollButton>
        </ScrollBar>
    </TableArea>
);

const App = () => {
    return (
        <React.Fragment>
            <GlobalStyle />
            <Page>
                <Window>
                    <Header>
                        <Brand>
                            <Logo />
                            <BrandName>SmartDispatch</BrandName>
                        </Brand>
                        <Nav>
                            {navItems.map(item => (
                                <NavItem key={item.name} type="button" $active={item.active}>
                                    {item.icon}
                                    {item.name}
                                </NavItem>
                            ))}
                        </Nav>
                        <HeaderSide>
                            <WindowButtons>
                                <WindowButton type="button" aria-label="Minimize">
                                    <svg width="12" height="12"><path d="M1 10h8" stroke="#e6e8fa" strokeWidth="2" /></svg>
                                </WindowButton>
                                <WindowButton type="button" aria-label="Close">
                                    <svg width="12" height="12"><path d="M2 2l8 8M10 2l-8 8" stroke="#e6e8fa" strokeWidth="2.200" /></svg>
                                </WindowButton>
                            </WindowButtons>
                            <Clock>15:18:59</Clock>
                        </HeaderSide>
                    </Header>
                    <Body>
                        <Rail>
                            <RailButton type="button" aria-label="Expand">
                                <svg width="10" height="16"><path d="M1 1l7 7-7 7" fill="none" stroke="#b4b9ef" strokeWidth="2.500" /></svg>
                            </RailButton>
                            <RailLabel>资源</RailLabel>
                        </Rail>
                        <ControlPanel />
                        <Main>
                            <AudioBar>
                                <Channel $width="261px"><MicIcon /><Volume name="Microphone" start={79} gap="4px" /></Channel>
                                <Channel $width="288px"><ChannelMark>L</ChannelMark><SpeakerIcon /><Volume name="Left" start={56} gap="6px" /></Channel>
                                <Channel $width="200px"><ChannelMark>R</ChannelMark><SpeakerIcon /><Volume name="Right" start={100} gap="6px" /></Channel>
                                <MuteButton type="button">Mute</MuteButton>
                            </AudioBar>
                            <TabStrip>
                                <Tab type="button">
                                    <DispatchIcon size={12} color="#f2f8ee" />
                                    <span>调度员互通</span>
                                    <SpeakerIcon color="#ecbc17" width={18} />
                                </Tab>
                            </TabStrip>
                            <MapPanel />
                            <PointTable />
                        </Main>
                    </Body>
                </Window>
            </Page>
        </React.Fragment>
    );
};

export default App;
